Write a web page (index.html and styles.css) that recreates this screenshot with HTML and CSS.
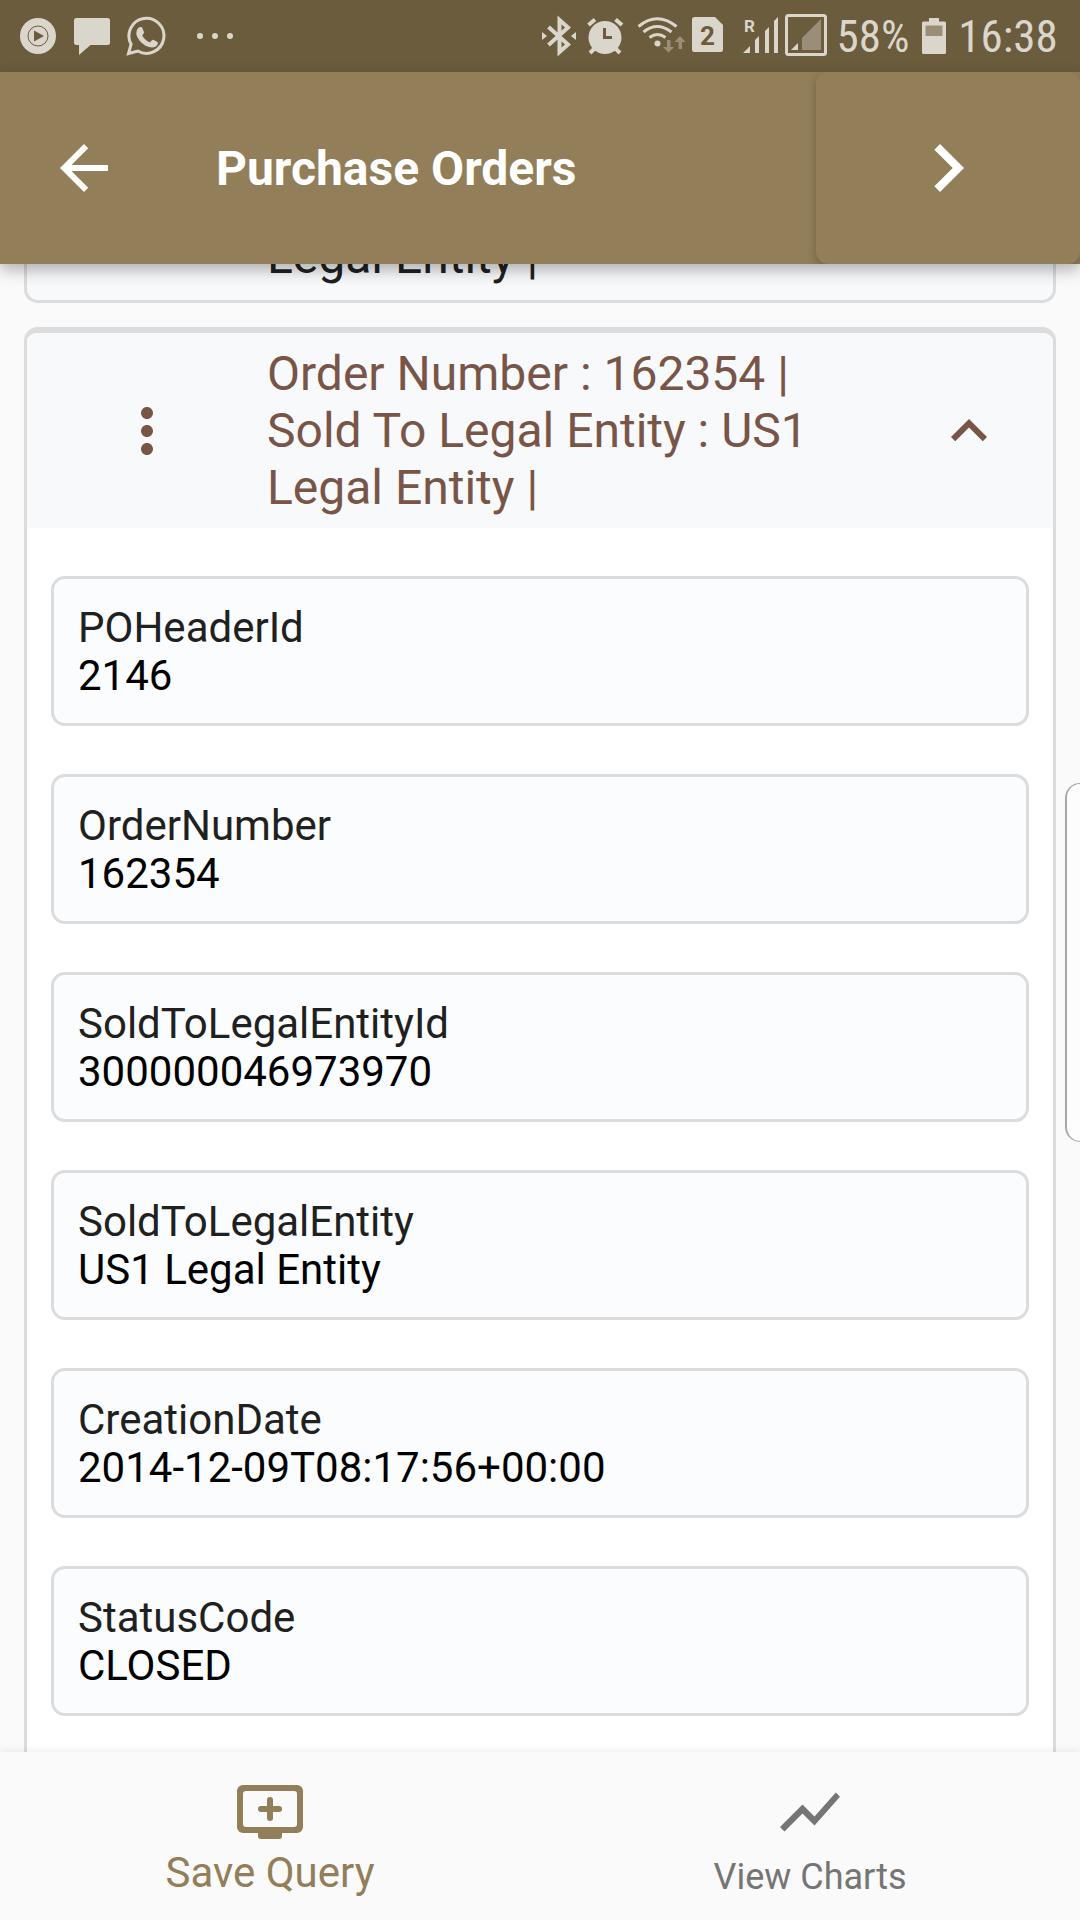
FILE: index.html
```html
<!DOCTYPE html>
<html lang="en">
<head>
<meta charset="utf-8">
<meta name="viewport" content="width=device-width, initial-scale=1">
<title>Purchase Orders</title>
<link rel="stylesheet" href="styles.css">
</head>
<body>
<div class="status-bar">
  <div class="status-group">
    <svg width="38" height="72" viewBox="20 0 38 72"><circle class="ink" cx="38" cy="36" r="18"/><circle class="cut-line" cx="38" cy="36" r="10"/><path class="cut" d="M34 30.500l10 5.500-10 5.500z"/></svg>
    <svg width="36" height="72" viewBox="74 0 36 72"><path class="ink" d="M76.500 18h31a2.500 2.500 0 0 1 2.500 2.500v22a2.500 2.500 0 0 1-2.500 2.500H90.500L79 55V45h-2.500a2.500 2.500 0 0 1-2.500-2.500v-22a2.500 2.500 0 0 1 2.500-2.500z"/></svg>
    <svg width="40" height="72" viewBox="126 0 40 72"><path class="line" d="M128.500 53.500l2.600-9.300a17.500 17.500 0 1 1 6.700 6.800z"/><path class="ink" d="M139.500 27.200c1.500-.5 2.500 0 3 1.200l1.400 3.400c.4 1-.2 2-1.700 3.700 2 3.300 4.300 5.500 7.800 7 1.700-2.200 2.500-3 3.600-2.500l3.500 1.700c1 .5 1 1.500.4 2.900-1.200 2.600-4.900 3.500-8.400 2.400-6-1.900-10.800-6.800-12.400-11.600-.9-3.400.2-7.200 2.800-8.200z"/></svg>
    <svg width="51" height="72" viewBox="182 0 51 72"><g class="ink"><circle cx="200" cy="36" r="3"/><circle cx="215" cy="36" r="3"/><circle cx="230" cy="36" r="3"/></g></svg>
  </div>
  <div class="status-group status-end">
    <svg width="38" height="72" viewBox="540 0 38 72"><path class="line bold" d="M548.500 27L568 44.500 559.500 52V20L568 27.500 548.500 45"/><path class="ink" d="M542 32l5 4-5 4zM576 32l-5 4 5 4z"/></svg>
    <svg width="40" height="72" viewBox="586 0 40 72"><circle class="ink" cx="605" cy="37.500" r="16.500"/><path class="line bold" d="M588.500 25l6.500-5.500M622 25l-6.500-5.500M594 49l-4 4M616 49l4 4"/><path class="cut-line thick" d="M604.500 28v9.500h7.500"/></svg>
    <svg width="50" height="72" viewBox="634 0 50 72"><path class="line" d="M638.500 26.500q18.500-15.500 38 0M643.500 32q13.500-11 28 0M649.500 37.500q8-6 16 0"/><circle class="ink" cx="657.500" cy="43.500" r="3"/><path class="dim" d="M667 40h3.500v7h3.500l-5.500 5.500-5.500-5.500h4zM678.500 49h3.500v-7h3.500l-5.500-6-5.500 6h4z"/></svg>
    <svg width="34" height="72" viewBox="692 0 34 72"><path class="ink" d="M694.500 17H715l8 8v24.500a2.500 2.500 0 0 1-2.500 2.500h-26a2.500 2.500 0 0 1-2.500-2.500v-30a2.500 2.500 0 0 1 2.500-2.500z"/><text class="sim-number" x="707.500" y="45">2</text></svg>
    <svg width="44" height="72" viewBox="734 0 44 72"><path class="ink" d="M743 53l7-7v7zM755 53V40l4-4v17zM765 53V31l4-4v26zM774 53V21l4-4v36z"/><text class="roaming" x="744" y="32">R</text></svg>
    <svg width="42" height="72" viewBox="786 0 42 72"><rect class="line" x="786.500" y="15.500" width="39" height="39" rx="2"/><path class="dim" d="M802 50V38l19-19v31z"/><path class="ink" d="M791 50l7-7v7z"/></svg>
    <span class="battery-level">58%</span>
    <svg width="32" height="72" viewBox="918 0 32 72"><path class="ink" d="M929 18h10v3.500h5.500a1.500 1.500 0 0 1 1.500 1.500v29.500a1.500 1.500 0 0 1-1.500 1.500h-21a1.500 1.500 0 0 1-1.500-1.500V23a1.500 1.500 0 0 1 1.500-1.500h5.500z"/><path class="dim" d="M925.500 25.500h17V36h-17z"/></svg>
    <span class="clock">16:38</span>
  </div>
</div>

<header class="app-bar">
  <button class="back" type="button" aria-label="Back"><svg width="72" height="72" viewBox="0 0 24 24"><path d="M20 11H7.830l5.590-5.590L12 4l-8 8 8 8 1.410-1.410L7.830 13H20z"/></svg></button>
  <h1 class="title">Purchase Orders</h1>
  <button class="next" type="button" aria-label="Next"><svg width="96" height="96" viewBox="0 0 24 24"><path d="M10 6L8.590 7.410 13.170 12l-4.580 4.590L10 18l6-6z"/></svg></button>
</header>

<main class="orders">
  <section class="card card-previous">
    <p class="order-title">Legal Entity |</p>
  </section>
  <section class="card card-open">
    <div class="order-head">
      <button class="more" type="button" aria-label="More options"><svg width="72" height="72" viewBox="0 0 24 24"><path d="M12 8c1.100 0 2-.9 2-2s-.9-2-2-2-2 .9-2 2 .9 2 2 2zm0 2c-1.100 0-2 .9-2 2s.9 2 2 2 2-.9 2-2-.9-2-2-2zm0 6c-1.100 0-2 .9-2 2s.9 2 2 2 2-.9 2-2-.9-2-2-2z"/></svg></button>
      <h2 class="order-title">Order Number : 162354 |<br>Sold To Legal Entity : US1<br>Legal Entity |</h2>
      <button class="collapse" type="button" aria-label="Collapse" aria-expanded="true"><svg width="72" height="72" viewBox="0 0 24 24"><path d="M12 8l-6 6 1.410 1.410L12 10.830l4.590 4.580L18 14z"/></svg></button>
    </div>
    <dl class="fields">
      <div class="field"><dt>POHeaderId</dt><dd>2146</dd></div>
      <div class="field"><dt>OrderNumber</dt><dd>162354</dd></div>
      <div class="field"><dt>SoldToLegalEntityId</dt><dd>300000046973970</dd></div>
      <div class="field"><dt>SoldToLegalEntity</dt><dd>US1 Legal Entity</dd></div>
      <div class="field"><dt>CreationDate</dt><dd>2014-12-09T08:17:56+00:00</dd></div>
      <div class="field"><dt>StatusCode</dt><dd>CLOSED</dd></div>
    </dl>
  </section>
</main>

<nav class="bottom-nav">
  <button class="nav-item active" type="button"><svg width="72" height="72" viewBox="0 0 24 24"><path fill-rule="evenodd" d="M21 3H3a2 2 0 0 0-2 2v12a2 2 0 0 0 2 2h5v1a1 1 0 0 0 1 1h6a1 1 0 0 0 1-1v-1h5a2 2 0 0 0 2-2V5a2 2 0 0 0-2-2zM20 17H4a1 1 0 0 1-1-1V6a1 1 0 0 1 1-1h16a1 1 0 0 1 1 1v10a1 1 0 0 1-1 1z"/><path d="M16 11a1 1 0 0 1-1 1h-2v2a1 1 0 0 1-2 0v-2H9a1 1 0 0 1 0-2h2V8a1 1 0 0 1 2 0v2h2a1 1 0 0 1 1 1z"/></svg><span>Save Query</span></button>
  <button class="nav-item" type="button"><svg width="72" height="72" viewBox="0 0 24 24"><path d="M3.500 18.490l6-6.010 4 4L22 6.920l-1.410-1.410-7.090 7.970-4-4L2 16.990z"/></svg><span>View Charts</span></button>
</nav>
<div class="edge-handle"></div>
</body>
</html>
```
FILE: styles.css
```css
* {
  box-sizing: border-box;
}

body {
  margin: 0;
  height: 100vh;
  display: flex;
  flex-direction: column;
  overflow: hidden;
  background: #fafafa;
  font-family: Roboto, "Liberation Sans", sans-serif;
  color: #1f2120;
}

h1, h2, p, dl, dt, dd {
  margin: 0;
  font-weight: 400;
}

button {
  border: 0;
  padding: 0;
  background: none;
  color: inherit;
  font: inherit;
  display: flex;
  align-items: center;
  justify-content: center;
}

svg {
  display: block;
  flex: none;
  fill: currentColor;
}

/* Status bar */
.status-bar {
  flex: none;
  height: 72px;
  display: flex;
  padding: 0 22px 0 20px;
  background: #6b5c3d;
  color: #dbd6cc;
}

.status-group {
  display: flex;
  align-items: center;
  gap: 16px;
}

.status-end {
  margin-left: auto;
  gap: 8px;
  font: 45px/72px "Roboto Condensed", "Liberation Sans Narrow", Roboto, sans-serif;
}

.status-bar svg {
  overflow: visible;
}

.battery-level,
.clock {
  padding-top: 2px;
  text-align: center;
}

.battery-level {
  width: 74px;
}

.clock {
  width: 100px;
}

.ink { fill: #dbd6cc; }
.cut { fill: #6b5c3d; }
.dim { fill: #9a8e78; }
.line { fill: none; stroke: #dbd6cc; stroke-width: 3px; }
.bold { stroke-width: 4px; }
.cut-line { fill: none; stroke: #6b5c3d; stroke-width: 1px; }
.thick { stroke-width: 3px; }

.sim-number {
  fill: #6b5c3d;
  font: 700 26px Roboto, sans-serif;
  text-anchor: middle;
}

.roaming {
  fill: #dbd6cc;
  font: 700 17px Roboto, sans-serif;
}

/* App bar */
.app-bar {
  position: relative;
  z-index: 1;
  flex: none;
  height: 192px;
  display: flex;
  align-items: center;
  background: #927e58;
  color: #fff;
  box-shadow: 0 6px 15px rgba(0, 0, 0, 0.3);
}

.back {
  width: 168px;
  height: 168px;
}

.title {
  flex: 1;
  padding: 2px 0 0 48px;
  font-size: 48px;
  line-height: 56px;
  font-weight: 700;
}

.next {
  width: 264px;
  height: 192px;
  border-radius: 12px;
  background: #927e58;
  box-shadow: 0 3px 9px rgba(0, 0, 0, 0.25);
  clip-path: inset(0 0 0 -12px);
}

/* Order list */
.orders {
  flex: 1;
  min-height: 0;
  display: flex;
  flex-direction: column;
  gap: 24px;
  padding: 0 24px;
  overflow: hidden;
}

.card {
  flex: none;
  border: 3px solid #dadcdd;
  border-radius: 14px;
  background: #f8f9fb;
}

.order-title {
  font-size: 48px;
  line-height: 57px;
}

.card-previous {
  margin-top: -36px;
  border-top: 0;
  padding: 0 48px 15px 240px;
}

.card-open {
  flex: 1 0 auto;
  border-top-width: 6px;
  border-bottom: 0;
  border-radius: 14px 14px 0 0;
  background: #fff;
}

.order-head {
  display: flex;
  align-items: center;
  padding: 12px 48px;
  background: #f8f9fb;
  border-radius: 11px 11px 0 0;
  color: #795548;
}

.order-head .order-title {
  flex: 1;
  padding-left: 48px;
}

.more {
  width: 144px;
  height: 144px;
}

.fields {
  display: flex;
  flex-direction: column;
  gap: 48px;
  padding: 48px 24px 36px;
}

.field {
  border: 3px solid #dadcdd;
  border-radius: 14px;
  padding: 25px 24px 23px;
  background: #fbfcfe;
  font-size: 42px;
  line-height: 48px;
}

.field dd {
  color: #000;
}

/* Bottom navigation */
.bottom-nav {
  position: relative;
  z-index: 1;
  flex: none;
  height: 168px;
  display: flex;
  background: #fafafa;
  box-shadow: 0 0 9px rgba(0, 0, 0, 0.09);
}

.nav-item {
  flex: 1;
  flex-direction: column;
  justify-content: flex-start;
  padding-top: 24px;
  color: #757575;
  font-size: 36px;
  line-height: 58px;
}

.nav-item.active {
  color: #927e58;
  font-size: 42px;
  line-height: 50px;
}

/* Edge panel handle that floats over the right side of the screen */
.edge-handle {
  position: absolute;
  right: 0;
  top: 783px;
  width: 15px;
  height: 359px;
  border: 1px solid #a8a8a8;
  border-left-width: 2px;
  border-right: 0;
  border-radius: 18px 0 0 18px;
  background: #fdfdfd;
}
```
